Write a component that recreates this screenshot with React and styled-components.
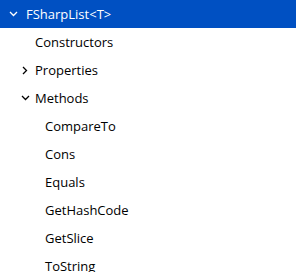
import styled, { createGlobalStyle } from "styled-components";

const GlobalStyle = createGlobalStyle`
  html, body {
    margin: 0;
    padding: 0;
    background: #ffffff;
  }
  body {
    font-family: "Open Sans", "Noto Sans", sans-serif;
    font-size: 13px;
    overflow: hidden;
  }
`;

const Tree = styled.ul`
  list-style: none;
  margin: 0;
  padding: 0;
  width: 296px;
`;

const Row = styled.li`
  display: flex;
  align-items: center;
  height: 28px;
  padding-left: ${(p) => p.$indent}px;
  background: ${(p) => (p.$selected ? "#0050c2" : "transparent")};
  color: ${(p) => (p.$selected ? "#ffffff" : "#000000")};
  cursor: default;
`;

const Twisty = styled.span`
  display: flex;
  align-items: center;
  justify-content: center;
  width: 16px;
  height: 16px;
  flex-shrink: 0;
  margin-right: ${(p) => p.$gap}px;
`;

const Label = styled.span`
  white-space: nowrap;
  line-height: 28px;
`;

const ChevronDown = () => (
  <svg width="9" height="6" viewBox="0 0 9 6" fill="none">
    <path d="M1 1 L4.5 4.5 L8 1" stroke="currentColor" strokeWidth="1.3" />
  </svg>
);

const ChevronRight = () => (
  <svg width="6" height="9" viewBox="0 0 6 9" fill="none">
    <path d="M1 1 L4.5 4.5 L1 8" stroke="currentColor" strokeWidth="1.3" />
  </svg>
);

const items = [
  { label: "FSharpList<T>", level: 0, state: "open", selected: true },
  { label: "Constructors", level: 1 },
  { label: "Properties", level: 1, state: "closed" },
  { label: "Methods", level: 1, state: "open" },
  { label: "CompareTo", level: 2 },
  { label: "Cons", level: 2 },
  { label: "Equals", level: 2 },
  { label: "GetHashCode", level: 2 },
  { label: "GetSlice", level: 2 },
  { label: "ToString", level: 2 },
];

const gaps = [5, 2, 0];

export default function App() {
  return (
    <>
      <GlobalStyle />
      <Tree>
        {items.map((it) => (
          <Row key={it.label} $indent={5 + it.level * 12} $selected={it.selected}>
            <Twisty $gap={gaps[it.level]}>
              {it.state === "open" && <ChevronDown />}
              {it.state === "closed" && <ChevronRight />}
            </Twisty>
            <Label>{it.label}</Label>
          </Row>
        ))}
      </Tree>
    </>
  );
}
